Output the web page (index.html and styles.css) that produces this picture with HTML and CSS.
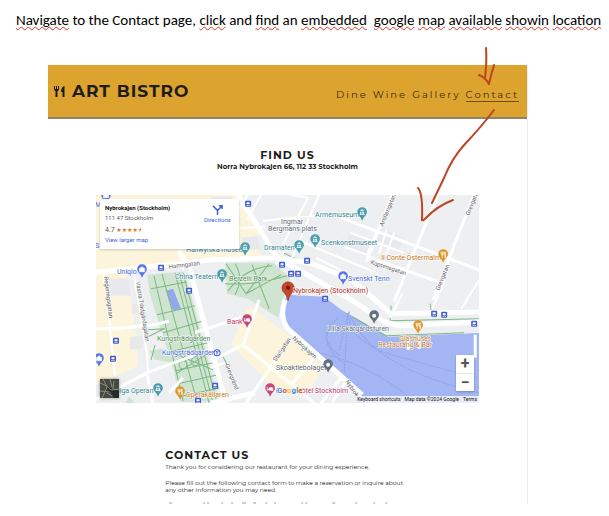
FILE: index.html
```html
<!DOCTYPE html>
<html lang="en">
<head>
<meta charset="utf-8">
<title>Art Bistro – Contact</title>
<link rel="stylesheet" href="styles.css">
</head>
<body>
<p class="step"><u>Navigate</u> to the Contact page, <u>click</u> and <u>find</u> an <u>embedded</u>&nbsp; <u>google</u> <u>map</u> <u>available</u> <u>showin</u> <u>location</u></p>
<main class="site">
  <header class="topbar">
    <h1 class="brand">
      <svg class="brand-icon" viewBox="0 0 13 14" aria-hidden="true"><path d="M1 2v3q0 2 1.500 2v6h2V7Q6 7 6 5V2H5v3H4V2H3v3H2V2zM11.500 2Q8 3 8 8h1.500v5h2z"/></svg>
      ART BISTRO
    </h1>
    <nav class="nav"><a href="#dine">Dine</a><a href="#wine">Wine</a><a href="#gallery">Gallery</a><a class="current" href="#contact">Contact</a></nav>
  </header>
  <section class="find">
    <h2>FIND US</h2>
    <p>Norra Nybrokajen 66, 112 33 Stockholm</p>
  </section>
  <section class="map" aria-label="Map">
    <svg class="map-art" viewBox="95 195 383 208" preserveAspectRatio="xMidYMid slice">
      <defs>
        <path id="drop" d="M0 8Q-1 5-3.500 2.500A4.800 4.800 0 1 1 3.500 2.500Q1 5 0 8z"/>
        <g id="bus"><rect x="-3" y="-3" width="6" height="6" rx="1" fill="#3f5bd0"/><path d="M-1.500-1.500h3v2h-3zM-1.500 1.200h1v1h-1zM.5 1.200h1v1h-1z" fill="#fff"/></g>
        <g id="museum"><use href="#drop" fill="#4b9dab"/><path d="M-2.500-2L0-3.500 2.500-2zM-2-1h1v2h-1zM-.5-1h1v2h-1zM1-1h1v2h-1zM-2.500 1.300h5v.8h-5z" fill="#fff"/></g>
        <g id="shop"><use href="#drop" fill="#5577e8"/><path d="M-2.500-1.500h5V2h-5zM-1.500-1.500q1.500-3 3 0" fill="#fff" stroke="#fff" stroke-width=".6"/></g>
        <g id="hotel"><use href="#drop" fill="#c74878"/><path d="M-2.800-2v4M-2.800 1h5.600v1M-1-1h3.500V1H-1z" fill="#fff" stroke="#fff" stroke-width=".7"/></g>
        <g id="food"><use href="#drop" fill="#df9527"/><path d="M-2-3v2q0 1 1 1v3M0-3v2q0 1-1 1M-1-3v3M2-3Q.8-2 1 0h1v3z" fill="none" stroke="#fff" stroke-width=".8"/></g>
      </defs>
      <path class="land" d="M90 190h394v218H90z"/>
      <g class="sand">
        <path d="M94 195h144l11 18 12 17-8 15 10 13-76 4-60 6-2 6 4 25 6 32 2 35-10 5-33 15z"/>
        <path d="M248 305l42 33 33 30-20 30-26-6-47-47z"/>
      </g>
      <g class="block"><path d="M107 279h20l3 17h-20zM129 337l12-1 1 12-13 2zM131 305l12-2 1 10-13 1zM210 197h20l8 15-28 5zM240 238l16-2 3 13-15 2zM378 228l25 10-6 13-24-9zM349 233l22 9-6 13-22-8z"/></g>
      <g class="park">
        <path d="M146 275l36-3 8 23 28 107h-39l-6-30-24-77z"/>
        <path d="M224 263h48l17 15-8 25-4 15-30-19-21-5z"/>
        <path d="M148 351l14-2 10 14-18-3z"/>
        <path d="M124 403l4-6 6 6z"/>
      </g>
      <path class="water" d="M287 295l36 2 17 13 47 27 97-4v75H357v-16l-17-17-45-40q-13-11-13-25 0-9 5-15z"/>
      <path class="pool" d="M165 291l7-2 8 20-8 2z"/>
      <g class="trails">
        <path d="M153 276l29 125M161 274l35 128M174 273l34 130M178 273l34 130M182 273l34 130M150 289l36-7M156 315l38-9M162 333l41-12M147 337l16-8M147 330l17-1M169 352l38-9M174 371l38-8M177 384l40-9M178 397l41-9M169 352l43 18M175 374l34-22M154 345l-4 15"/>
        <circle cx="182" cy="365" r="4"/><circle cx="194" cy="362" r="4"/>
        <path d="M225 264l20 30 23-30M224 284q30 2 62-8M234 264q9 14 0 31M227 291q18-24 44-25M251 265l17 44M245 294l35-19M282 253l23 11M351 317l34 19 78-3M389 321l90-2M389 321l1-15M430 310l-1-6M222 357l4 8"/>
      </g>
      <g class="wake"><path d="M348 312q-3 27 39 42l91 25M349 315q20 52 129 78M347 313l-9 38M347 313l-4 60M300 350q60 8 110 49M333 325q-17 14 6 31M337 318q-26 20 5 45"/></g>
      <g class="road minor">
        <path d="M102 270l4 32 8 74M133 275l7 42 6 37 1 20M111 330l32-5M247 195l-11 17M260 195l-14 25M210 230l54-3M289 195l18 3-25 46M318 195l-31 72M262 221l80-8M300 242l73 30M315 258l20 10 15 8M349 233l54 20M343 247l23 8 10-25M378 228l-8 24M385 231l-7 23M393 233l-8 22M389 318l12-24M431 309l14-31M460 309l20-32M194 332l24-7 22-7M224 363l-15 5M286 246l-11 19M178 252l4 18M238 195l-5 10"/>
      </g>
      <g class="road">
        <path d="M340 218l140 53M392 193l-27 69M437 195l-24 57-20 50M473 195l-17 43-24 62M368 258l69 24M94 400l54-28 44-16M146 375l6 28M168 393l14-15M178 250l13 22M258 300l-16 45 71 58M290 338l-45 65M313 358l-23 27M340 378l-20 25M345 382l-14 20M242 345l-32 16M94 329q55-1 74-8M194 333l48-16"/>
      </g>
      <g class="road major">
        <path d="M90 273l88-9 32-4 66-2 74 42 33 22 15 4 86-4M276 258l35 6 40 16 39 34 94-2M237 195l39 63M189 271l36 132M210 403l44-10M284 300q-6 18 3 29l36 32 38 34"/>
      </g>
      <path class="road" d="M474 335v23M407 337v13M418 337v12"/>
      <g class="t street">
        <text x="168" y="269" transform="rotate(-7 168 269)">Hamngatan</text>
        <text transform="translate(103 277) rotate(83)">Regeringsgatan</text>
        <text transform="translate(135 282) rotate(81)">Västra Trädgårdsgatan</text>
        <text transform="translate(382 227) rotate(-68)">Artillerigatan</text>
        <text transform="translate(468 216) rotate(-68)">Grevgata</text>
        <text transform="translate(438 291) rotate(-68)">Grevgatan</text>
        <text transform="translate(369 264) rotate(18)">Kaptensgatan</text>
        <text transform="translate(275 362) rotate(-56)">Stallgatan</text>
        <text transform="translate(291 339) rotate(42)">Nybrokajen</text>
        <text transform="translate(224 365) rotate(68)">Grevgränd</text>
        <text transform="translate(344 382) rotate(55)">Nybrokaj</text>
      </g>
      <g class="t grey"><text x="280" y="224">Ingmar</text><text x="267" y="231">Bergmans plats</text><text x="326" y="331">Lilla Skärgårdsturen</text><text x="275" y="370">Skoaktiebolaget</text></g>
      <g class="t teal"><text x="185" y="252">Hallwylska museet</text><text x="263" y="250">Dramaten</text><text x="314" y="217">Armémuseum</text><text x="320" y="245">Scenkonstmuseet</text><text x="174" y="279">China Teatern</text><text x="117" y="393">liga Operan</text></g>
      <g class="t blue"><text x="94" y="207">M</text><text x="94" y="248">St</text><text x="116" y="274">Uniqlo</text><text x="347" y="281">Svenskt Tenn</text><text x="161" y="355">Kungsträdgården</text></g>
      <g class="t green"><text x="228" y="281">Berzelii Park</text><text x="156" y="341">Kungsträdgården</text></g>
      <g class="t orange"><text x="380" y="260">Il Conte Östermalm</text><text x="398" y="341">Glashuset</text><text x="377" y="347">Restaurang &amp; Bar</text><text x="185" y="397">Operakällaren</text></g>
      <g class="t pink"><text x="226" y="324">Bank</text><text x="275" y="393">Grand Hôtel Stockholm</text></g>
      <text class="t google" x="276" y="393"><tspan fill="#4285f4">G</tspan><tspan fill="#ea4335">o</tspan><tspan fill="#fbbc05">o</tspan><tspan fill="#4285f4">g</tspan><tspan fill="#34a853">l</tspan><tspan fill="#ea4335">e</tspan></text>
      <use href="#bus" x="247" y="204"/><use href="#bus" x="160" y="268"/><use href="#bus" x="188" y="291"/><use href="#bus" x="281" y="265"/><use href="#bus" x="290" y="274"/><use href="#bus" x="297" y="274"/><use href="#bus" x="306" y="261"/><use href="#bus" x="324" y="299"/><use href="#bus" x="115" y="341"/><use href="#bus" x="112" y="359"/><use href="#bus" x="214" y="386"/><use href="#bus" x="433" y="314"/><use href="#bus" x="443" y="315"/><use href="#bus" x="473" y="324"/><use href="#bus" x="197" y="401"/>
      <use href="#museum" x="244" y="248"/><use href="#museum" x="298" y="246"/><use href="#museum" x="314" y="240"/><use href="#museum" x="361" y="213"/><use href="#museum" x="221" y="275"/><use href="#museum" x="157" y="389"/>
      <use href="#shop" x="105" y="196"/><use href="#shop" x="141" y="270"/><use href="#shop" x="342" y="277"/><use href="#shop" x="98" y="359"/>
      <use href="#hotel" x="246" y="320"/><use href="#hotel" x="269" y="389"/>
      <use href="#food" x="442" y="255"/><use href="#food" x="417" y="326"/><use href="#food" x="179" y="392"/>
      <g fill="#63727e"><use href="#drop" x="373" y="316"/><use href="#drop" x="327" y="365"/></g>
      <g fill="#fff"><circle cx="373" cy="316" r="2"/><circle cx="327" cy="365" r="2"/></g>
      <circle cx="216" cy="353" r="3" fill="#fff" stroke="#3f5bd0"/><path d="M214.500 352h3M216 352v3" stroke="#3f5bd0"/>
      <path d="M287 301q-1-5-4-8a6.200 6.200 0 1 1 8 0q-3 3-4 8z" fill="#c5442b" stroke="#a73520" stroke-width=".6"/><circle cx="287" cy="288" r="2" fill="#6d1710"/>
      <text class="t place" x="292" y="293">Nybrokajen (Stockholm)</text>
    </svg>
    <div class="card">
      <div class="card-main">
        <strong>Nybrokajen (Stockholm)</strong>
        <span>111 47 Stockholm</span>
        <span class="rating">4.7 <b>★★★★⯨</b></span>
        <a href="#larger">View larger map</a>
      </div>
      <a class="directions" href="#directions"><svg viewBox="0 0 12 12" aria-hidden="true"><path d="M6 12V7L2 3M6 7l4-4M7.500 2H11v3.500M1 2l2 2" fill="none" stroke="currentColor" stroke-width="1.600"/></svg>Directions</a>
    </div>
    <button class="satellite" aria-label="Show satellite imagery"><svg viewBox="0 0 19 19" aria-hidden="true"><path fill="#45493f" d="M0 0h19v19H0z"/><path fill="#252c2e" d="M8 7l4 3 7 2v7h-5l-3-6-5-3z"/><path d="M0 4l7 3 4 4 8-1M3 0l4 8-5 11M10 0l2 8M14 2l-1 8M0 12l9 1M7 14l5 3" stroke="#8d8b80" fill="none"/></svg></button>
    <div class="zoom"><button aria-label="Zoom in">+</button><button aria-label="Zoom out">−</button></div>
    <div class="legal"><a href="#keys">Keyboard shortcuts</a><span>Map data ©2024 Google</span><a href="#terms">Terms</a></div>
  </section>
  <section class="contact" id="contact">
    <h2>CONTACT US</h2>
    <p>Thank you for considering our restaurant for your dining experience.</p>
    <p>Please fill out the following contact form to make a reservation or inquire about any other information you may need.</p>
    <svg class="cutline" viewBox="0 0 240 2" aria-hidden="true"><path d="M2 1h3M36 1h2M40 1h2M54 1h2M64 1h2M75 1h4M86 1h3M98 1h2M107 1h2M134 1h2M138 1h2M165 1h3M188 1h2M206 1h2M218 1h2" stroke="#999" fill="none"/></svg>
  </section>
  <svg class="arrows" viewBox="0 0 120 190" aria-hidden="true"><path d="M78 8q1 14-1 30M71 35q7 3 10 9 2-9 5-19M86 70Q74 86 57 104 44 118 36 138L24 163M10 148Q15 153 14 180q1 1 4-2Q29 166 45 160"/></svg>
</main>
</body>
</html>
```
FILE: styles.css
```css
* { box-sizing: border-box; }
body {
  margin: 0;
  background: #fff;
  color: #1c1c1c;
  font-family: Montserrat, Inter, sans-serif;
}
h1, h2, p { margin: 0; }
a { color: inherit; text-decoration: none; }
button { border: 0; padding: 0; font: inherit; }

.step {
  padding: 10px 0 0 16px;
  height: 65px;
  color: #000;
  font: 15px/20px Carlito, Lato, sans-serif;
  white-space: nowrap;
}
.step u {
  text-decoration: underline wavy #e03a20 1px;
  text-decoration-skip-ink: none;
  text-underline-offset: 1px;
}

.site {
  position: relative;
  margin: 0 81px 0 48px;
  border-right: 1px solid #ebebf2;
}
.topbar {
  display: flex;
  align-items: center;
  justify-content: space-between;
  height: 54px;
  padding: 0 8px 0 5px;
  background: #dca32f;
  border-bottom: 2px solid #908468;
}
.brand {
  display: flex;
  align-items: center;
  gap: 6px;
  font-size: 17px;
  line-height: 20px;
  font-weight: 700;
  letter-spacing: 1px;
}
.brand-icon { width: 13px; height: 14px; fill: #1c1c1c; }
.nav {
  display: flex;
  gap: 5px;
  padding-top: 8px;
  font-size: 10px;
  line-height: 12px;
  letter-spacing: 2px;
  color: #3a2d14;
}
.nav a { border-bottom: 1px solid transparent; }
.nav .current { border-color: #6b4e18; }

.find { padding: 29px 0 23px; text-align: center; }
.find h2, .contact h2 {
  font-size: 11px;
  line-height: 14px;
  font-weight: 700;
  letter-spacing: 1px;
}
.find p { font-size: 7px; line-height: 10px; font-weight: 700; }

.map {
  position: relative;
  width: 80%;
  margin: 0 auto;
  aspect-ratio: 384 / 208;
  overflow: hidden;
  font-family: Roboto, sans-serif;
}
.map-art { display: block; width: 100%; height: 100%; }
.land { fill: #edeff1; }
.sand { fill: #fcf5dc; }
.block { fill: #e7e9ec; }
.park { fill: #cfe5d1; }
.water { fill: #a3b5f2; }
.pool { fill: #91a8ec; }
.trails { fill: none; stroke: #7fb883; stroke-width: 1; }
.wake { fill: none; stroke: #8ca3e8; stroke-width: 1; stroke-dasharray: 2 1; }
.road { fill: none; stroke: #fff; stroke-width: 3; stroke-linejoin: round; }
.minor { stroke-width: 2; }
.major { stroke-width: 5; }
.t { font-size: 7px; stroke: #fff; stroke-width: 1px; paint-order: stroke; }
.street { font-size: 6px; fill: #5e6266; }
.grey { fill: #5d6b78; }
.teal { fill: #348491; }
.blue { fill: #4565d8; }
.green { fill: #4a8653; }
.orange { fill: #c97818; }
.pink { fill: #bd3970; }
.place { fill: #b02b20; }
.google { font-size: 8px; font-weight: 700; }

.card {
  position: absolute;
  left: 4px;
  top: 4px;
  display: flex;
  justify-content: space-between;
  width: 139px;
  height: 50px;
  padding: 4px 8px 0 5px;
  background: #fff;
  box-shadow: 0 1px 2px #0003;
  font-size: 6px;
  line-height: 8px;
}
.card-main { display: flex; flex-direction: column; gap: 2px; color: #5c5c5c; white-space: nowrap; }
.card strong { color: #111; line-height: 9px; }
.card .rating { font-size: 7px; padding-top: 2px; }
.rating b { color: #d87b20; font: 6px/8px "DejaVu Sans", sans-serif; }
.card a { color: #3c5fdb; }
.directions { display: flex; flex-direction: column; align-items: center; gap: 1px; padding-top: 1px; }
.directions svg { width: 11px; height: 11px; }
.satellite {
  position: absolute;
  left: 4px;
  bottom: 5px;
  width: 19px;
  height: 19px;
  box-shadow: 0 0 3px #0006;
}
.satellite svg { display: block; }
.zoom {
  position: absolute;
  right: 5px;
  bottom: 12px;
  display: grid;
  width: 18px;
  background: #fff;
  box-shadow: 0 1px 2px #0004;
}
.zoom button {
  height: 18px;
  background: none;
  color: #555;
  font-size: 16px;
  line-height: 18px;
  font-weight: 700;
}
.zoom button + button { border-top: 1px solid #e8e8e8; }
.legal {
  position: absolute;
  right: 0;
  bottom: 0;
  display: flex;
  gap: 4px;
  padding: 0 2px 0 1px;
  background: #e8ecf8;
  color: #111;
  font-size: 5px;
  line-height: 7px;
}

.contact {
  width: 51%;
  margin: 0 auto;
  padding-top: 45px;
  font-size: 6px;
  line-height: 7px;
}
.contact p { padding-top: 2px; }
.contact p + p { padding-top: 9px; }
.cutline { display: block; width: 100%; height: 2px; margin-top: 8px; }

.arrows {
  position: absolute;
  top: -25px;
  right: -1px;
  width: 120px;
  height: 190px;
  fill: none;
  stroke: #bf4424;
  stroke-width: 2;
  stroke-linecap: round;
  stroke-linejoin: round;
  pointer-events: none;
}
```
